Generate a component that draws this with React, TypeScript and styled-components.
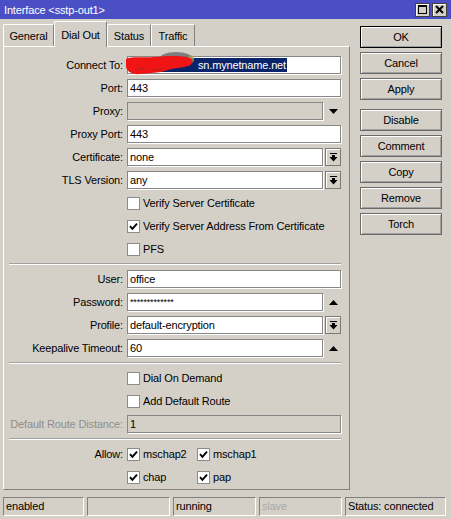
import styled, { createGlobalStyle } from "styled-components";

const GlobalStyle = createGlobalStyle`
  body {
    margin: 0;
    background: #d4d0c8;
    font-family: "Liberation Sans", Arial, sans-serif;
    font-size: 11px;
    letter-spacing: -0.15px;
    color: #000;
  }
`;

type Side = "none" | "drop" | "down" | "up";

const FieldRow = ({
  label,
  value,
  side = "none",
  disabled,
  mutedLabel,
  password,
}: {
  label: string;
  value?: string;
  side?: Side;
  disabled?: boolean;
  mutedLabel?: boolean;
  password?: boolean;
}) => (
  <Row>
    <Label $muted={mutedLabel}>{label}</Label>
    <Field>
      <TextBox $disabled={disabled} $small={password}>
        {value}
      </TextBox>
      {side === "drop" && (
        <DropButton>
          <DropIcon />
        </DropButton>
      )}
      {(side === "down" || side === "up") && (
        <SideSlot>
          <TriIcon dir={side} />
        </SideSlot>
      )}
    </Field>
  </Row>
);

const Check = ({ checked, label }: { checked?: boolean; label: string }) => (
  <CheckItem>
    <Box>
      {checked && (
        <svg width="9" height="9" viewBox="0 0 9 9">
          <path d="M1 4.2 L3.4 6.8 L8 1.6" stroke="#000" strokeWidth="1.9" fill="none" />
        </svg>
      )}
    </Box>
    {label}
  </CheckItem>
);

const DropIcon = () => (
  <svg width="9" height="9" viewBox="0 0 9 9">
    <rect x="1" y="0" width="7" height="1" fill="#000" />
    <rect x="3" y="2" width="3" height="2" fill="#000" />
    <polygon points="0.5,4 8.5,4 4.5,8.5" fill="#000" />
  </svg>
);

const TriIcon = ({ dir }: { dir: "up" | "down" }) => (
  <svg width="9" height="5" viewBox="0 0 9 5">
    <polygon points={dir === "down" ? "0,0 9,0 4.5,5" : "0,5 9,5 4.5,0"} fill="#000" />
  </svg>
);

const App = () => {
  return (
    <Window>
      <GlobalStyle />
      <TitleBar>
        <span>{"Interface <sstp-out1>"}</span>
        <TitleButtons>
          <TitleButton>
            <svg width="9" height="9" viewBox="0 0 9 9">
              <rect x="0.5" y="0.5" width="8" height="8" stroke="#000" fill="none" />
              <rect x="0" y="0" width="9" height="2" fill="#000" />
            </svg>
          </TitleButton>
          <TitleButton>
            <svg width="9" height="9" viewBox="0 0 9 9">
              <path d="M1 1 L8 8 M8 1 L1 8" stroke="#000" strokeWidth="2" />
            </svg>
          </TitleButton>
        </TitleButtons>
      </TitleBar>

      <Main>
        <LeftColumn>
          <TabStrip>
            <Tab $width={51}>General</Tab>
            <Tab $width={53} $active>
              Dial Out
            </Tab>
            <Tab $width={44}>Status</Tab>
            <Tab $width={44}>Traffic</Tab>
          </TabStrip>

          <Panel>
            <Row>
              <Label>Connect To:</Label>
              <Field>
                <TextBox>
                  <Selection>sn.mynetname.net</Selection>
                  <Scribble width="74" height="24" viewBox="0 0 74 24">
                    <ellipse cx="52" cy="6" rx="16" ry="6" fill="#707070" opacity="0.85" />
                    <ellipse cx="67" cy="7" rx="3" ry="4" fill="#a9a84e" opacity="0.7" />
                    <path
                      d="M2 7 C8 4 20 6 30 5 C42 4 56 3 66 6 C70 8 69 13 64 14 C58 16 50 16 44 18 C36 21 26 21 16 22 C8 23 2 19 2 14 Z"
                      fill="#f01414"
                    />
                    <path d="M14 17 L22 16 M30 18 L38 17" stroke="#9a2a2a" strokeWidth="1" />
                  </Scribble>
                </TextBox>
              </Field>
            </Row>
            <FieldRow label="Port:" value="443" />
            <FieldRow label="Proxy:" disabled side="down" />
            <FieldRow label="Proxy Port:" value="443" />
            <FieldRow label="Certificate:" value="none" side="drop" />
            <FieldRow label="TLS Version:" value="any" side="drop" />
            <CheckRow>
              <Check label="Verify Server Certificate" />
            </CheckRow>
            <CheckRow>
              <Check checked label="Verify Server Address From Certificate" />
            </CheckRow>
            <CheckRow>
              <Check label="PFS" />
            </CheckRow>

            <Separator />

            <FieldRow label="User:" value="office" />
            <FieldRow label="Password:" value="*************" side="up" password />
            <FieldRow label="Profile:" value="default-encryption" side="drop" />
            <FieldRow label="Keepalive Timeout:" value="60" side="up" />

            <Separator />

            <CheckRow>
              <Check label="Dial On Demand" />
            </CheckRow>
            <CheckRow>
              <Check label="Add Default Route" />
            </CheckRow>
            <FieldRow label="Default Route Distance:" value="1" disabled mutedLabel />

            <Separator />

            <Row>
              <Label>Allow:</Label>
              <Check checked label="mschap2" />
              <Check checked label="mschap1" />
            </Row>
            <CheckRow>
              <Check checked label="chap" />
              <Check checked label="pap" />
            </CheckRow>
          </Panel>
        </LeftColumn>

        <ButtonColumn>
          <WinButton $primary>OK</WinButton>
          <WinButton>Cancel</WinButton>
          <WinButton>Apply</WinButton>
          <WinButton $gapBefore>Disable</WinButton>
          <WinButton>Comment</WinButton>
          <WinButton>Copy</WinButton>
          <WinButton>Remove</WinButton>
          <WinButton>Torch</WinButton>
        </ButtonColumn>
      </Main>

      <StatusBar>
        <StatusCell $width={81}>enabled</StatusCell>
        <StatusCell $width={83} />
        <StatusCell $width={83}>running</StatusCell>
        <StatusCell $width={83} $muted>
          slave
        </StatusCell>
        <StatusCell>Status: connected</StatusCell>
      </StatusBar>
    </Window>
  );
};

export default App;

const Window = styled.div`
  width: 451px;
  height: 519px;
  background: #d4d0c8;
  display: flex;
  flex-direction: column;
  overflow: hidden;
`;

const TitleBar = styled.div`
  height: 19px;
  flex: none;
  box-sizing: border-box;
  padding: 0 4px;
  background: #4b4fc5;
  color: #fff;
  display: flex;
  align-items: center;
  justify-content: space-between;
`;

const TitleButtons = styled.div`
  display: flex;
  gap: 2px;
`;

const TitleButton = styled.div`
  width: 15px;
  height: 14px;
  box-sizing: border-box;
  background: #d4d0c8;
  border: 1px solid #404040;
  box-shadow: inset 1px 1px #fff;
  display: flex;
  align-items: center;
  justify-content: center;
`;

const Main = styled.div`
  display: flex;
  height: 471px;
  flex: none;
`;

const LeftColumn = styled.div`
  width: 347px;
  margin-left: 3px;
  display: flex;
  flex-direction: column;
`;

const TabStrip = styled.div`
  height: 27px;
  flex: none;
  display: flex;
  align-items: flex-end;
`;

const Tab = styled.div<{ $active?: boolean; $width: number }>`
  width: ${({ $width }) => $width}px;
  height: ${({ $active }) => ($active ? 26 : 22)}px;
  margin-bottom: ${({ $active }) => ($active ? -1 : 0)}px;
  position: relative;
  z-index: ${({ $active }) => ($active ? 2 : 0)};
  box-sizing: border-box;
  border: 1px solid #fff;
  border-bottom: none;
  border-right-color: #808080;
  border-radius: 2px 2px 0 0;
  background: #d4d0c8;
  display: flex;
  align-items: center;
  justify-content: center;
`;

const Panel = styled.div`
  height: 444px;
  box-sizing: border-box;
  border: 1px solid;
  border-color: #fff #808080 #808080 #fff;
  padding: 9px 7px 3px 0;
  display: flex;
  flex-direction: column;
  gap: 5px;
`;

const Row = styled.div`
  display: flex;
  align-items: center;
  height: 18px;
  flex: none;
`;

const Label = styled.div<{ $muted?: boolean }>`
  width: 120px;
  margin-right: 3px;
  padding-right: 1px;
  box-sizing: border-box;
  text-align: right;
  white-space: nowrap;
  color: ${({ $muted }) => ($muted ? "#8e8e8e" : "#000")};
`;

const Field = styled.div`
  width: 214px;
  height: 18px;
  display: flex;
  gap: 2px;
`;

const TextBox = styled.div<{ $disabled?: boolean; $small?: boolean }>`
  flex: 1;
  height: 18px;
  box-sizing: border-box;
  border: 1px solid #878787;
  box-shadow: 1px 1px 0 #fff;
  background: ${({ $disabled }) => ($disabled ? "#d4d0c8" : "#fff")};
  padding: 0 2px;
  line-height: 16px;
  font-size: ${({ $small }) => ($small ? 9 : 11)}px;
  white-space: nowrap;
  position: relative;
`;

const Selection = styled.span`
  display: inline-block;
  width: 158px;
  margin-left: -1px;
  padding-right: 1px;
  box-sizing: border-box;
  background: #0a246a;
  color: #fff;
  text-align: right;
  line-height: 14px;
  vertical-align: top;
  margin-top: 1px;
`;

const Scribble = styled.svg`
  position: absolute;
  left: -4px;
  top: -5px;
`;

const SideSlot = styled.div`
  width: 16px;
  height: 18px;
  flex: none;
  display: flex;
  align-items: center;
  justify-content: center;
`;

const DropButton = styled(SideSlot)`
  box-sizing: border-box;
  border: 1px solid #7a7a7a;
  box-shadow: inset 1px 1px #fff;
  background: #d4d0c8;
`;

const CheckRow = styled.div`
  display: flex;
  align-items: center;
  height: 18px;
  flex: none;
  padding-left: 123px;
`;

const CheckItem = styled.div`
  display: flex;
  align-items: center;
  gap: 3px;
  min-width: 70px;
  white-space: nowrap;
`;

const Box = styled.div`
  width: 13px;
  height: 13px;
  box-sizing: border-box;
  border: 1px solid #8c8c8c;
  background: #fff;
  display: flex;
  align-items: center;
  justify-content: center;
`;

const Separator = styled.div`
  height: 2px;
  width: 332px;
  margin-left: 5px;
  flex: none;
  box-sizing: border-box;
  border-top: 1px solid #a0a0a0;
  border-bottom: 1px solid #fff;
`;

const ButtonColumn = styled.div`
  width: 82px;
  margin-left: 10px;
  padding-top: 7px;
  display: flex;
  flex-direction: column;
  gap: 4px;
`;

const WinButton = styled.div<{ $primary?: boolean; $gapBefore?: boolean }>`
  height: 22px;
  flex: none;
  box-sizing: border-box;
  margin-top: ${({ $gapBefore }) => ($gapBefore ? 5 : 0)}px;
  border: 1px solid ${({ $primary }) => ($primary ? "#000" : "#6a6a6a")};
  box-shadow: inset 1px 1px #fff, inset -1px -1px #a0a0a0;
  display: flex;
  align-items: center;
  justify-content: center;
`;

const StatusBar = styled.div`
  display: flex;
  gap: 3px;
  height: 19px;
  margin-top: 7px;
  padding: 0 5px 0 3px;
  flex: none;
`;

const StatusCell = styled.div<{ $width?: number; $muted?: boolean }>`
  ${({ $width }) => ($width ? `width: ${$width}px; flex: none;` : "flex: 1;")}
  box-sizing: border-box;
  border: 1px solid;
  border-color: #808080 #fff #fff #808080;
  padding-left: 2px;
  line-height: 17px;
  white-space: nowrap;
  color: ${({ $muted }) => ($muted ? "#a9a9a9" : "#000")};
`;
